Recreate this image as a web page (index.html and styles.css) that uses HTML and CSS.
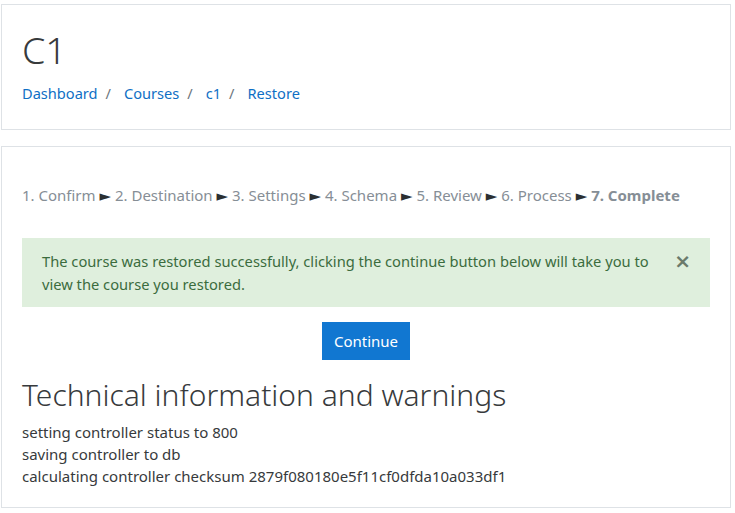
FILE: index.html
```html
<!DOCTYPE html>
<html lang="en">
<head>
<meta charset="utf-8">
<title>C1: Restore</title>
<link rel="stylesheet" href="styles.css">
</head>
<body>
<div class="page">
  <header class="card header-card">
    <h1 class="page-title">C1</h1>
    <nav class="breadcrumb">
      <a href="#">Dashboard</a><span class="sep">/</span>
      <a href="#">Courses</a><span class="sep">/</span>
      <a href="#">c1</a><span class="sep">/</span>
      <a href="#">Restore</a>
    </nav>
  </header>
  <main class="card main-card">
    <div class="steps"><span>1. Confirm</span> <span class="arrow">►</span> <span>2. Destination</span> <span class="arrow">►</span> <span>3. Settings</span> <span class="arrow">►</span> <span>4. Schema</span> <span class="arrow">►</span> <span>5. Review</span> <span class="arrow">►</span> <span>6. Process</span> <span class="arrow">►</span> <span class="current">7. Complete</span></div>
    <div class="alert">
      The course was restored successfully, clicking the continue button below will take you to view the course you restored.
      <button class="close" type="button" aria-label="Close">×</button>
    </div>
    <div class="actions">
      <button class="btn-primary" type="button">Continue</button>
    </div>
    <h2 class="section-title">Technical information and warnings</h2>
    <ul class="log">
      <li>setting controller status to 800</li>
      <li>saving controller to db</li>
      <li>calculating controller checksum 2879f080180e5f11cf0dfda10a033df1</li>
    </ul>
  </main>
</div>
</body>
</html>
```
FILE: styles.css
```css
html, body {
  margin: 0;
  padding: 0;
  background: #ffffff;
}
body {
  font-family: "Noto Sans", "Open Sans", "DejaVu Sans", sans-serif;
  font-size: 15px;
  line-height: 1.5;
  color: #373a3c;
}
.page {
  width: 730px;
  padding: 4px 0 0 1px;
}
.card {
  border: 1px solid #dee2e6;
  background: #fff;
  box-sizing: border-box;
  padding: 20px;
}
.header-card {
  height: 126px;
  margin-bottom: 16px;
}
.page-title {
  margin: 0;
  font-size: 37.5px;
  font-weight: 300;
  line-height: 1.2;
  color: #373a3c;
  padding-top: 2px;
}
.breadcrumb {
  margin-top: 11px;
  display: flex;
  align-items: center;
  font-size: 14.6px;
}
.breadcrumb a {
  color: #0f6fc5;
  text-decoration: none;
}
.breadcrumb .sep {
  color: #6c757d;
  padding: 0 13px 0 8px;
}
.main-card {
  height: 362px;
}
.steps {
  margin-top: 17px;
  color: #868e96;
  white-space: nowrap;
}
.steps .arrow {
  color: #2b2f32;
  font-size: 15px;
}
.steps .current {
  font-weight: 700;
}
.alert {
  position: relative;
  margin-top: 31px;
  background: #dfefdd;
  color: #3b6c3d;
  font-size: 14.7px;
  line-height: 23px;
  padding: 12px 48px 11px 20px;
}
.close {
  position: absolute;
  top: 13px;
  right: 19px;
  border: 0;
  background: none;
  padding: 0;
  font-family: "DejaVu Sans", sans-serif;
  font-size: 20px;
  font-weight: 700;
  line-height: 1;
  color: #6b7a6b;
}
.actions {
  display: flex;
  justify-content: center;
  margin-top: 15px;
}
.btn-primary {
  background: #1177d1;
  color: #fff;
  border: 0;
  font-family: inherit;
  font-size: 15px;
  line-height: 22px;
  padding: 8px 12px;
  height: 38px;
}
.section-title {
  margin: 17px 0 8px;
  font-size: 30px;
  font-weight: 300;
  line-height: 1.2;
  color: #373a3c;
}
.log {
  list-style: none;
  margin: 0;
  padding: 0;
  line-height: 22px;
}
```
